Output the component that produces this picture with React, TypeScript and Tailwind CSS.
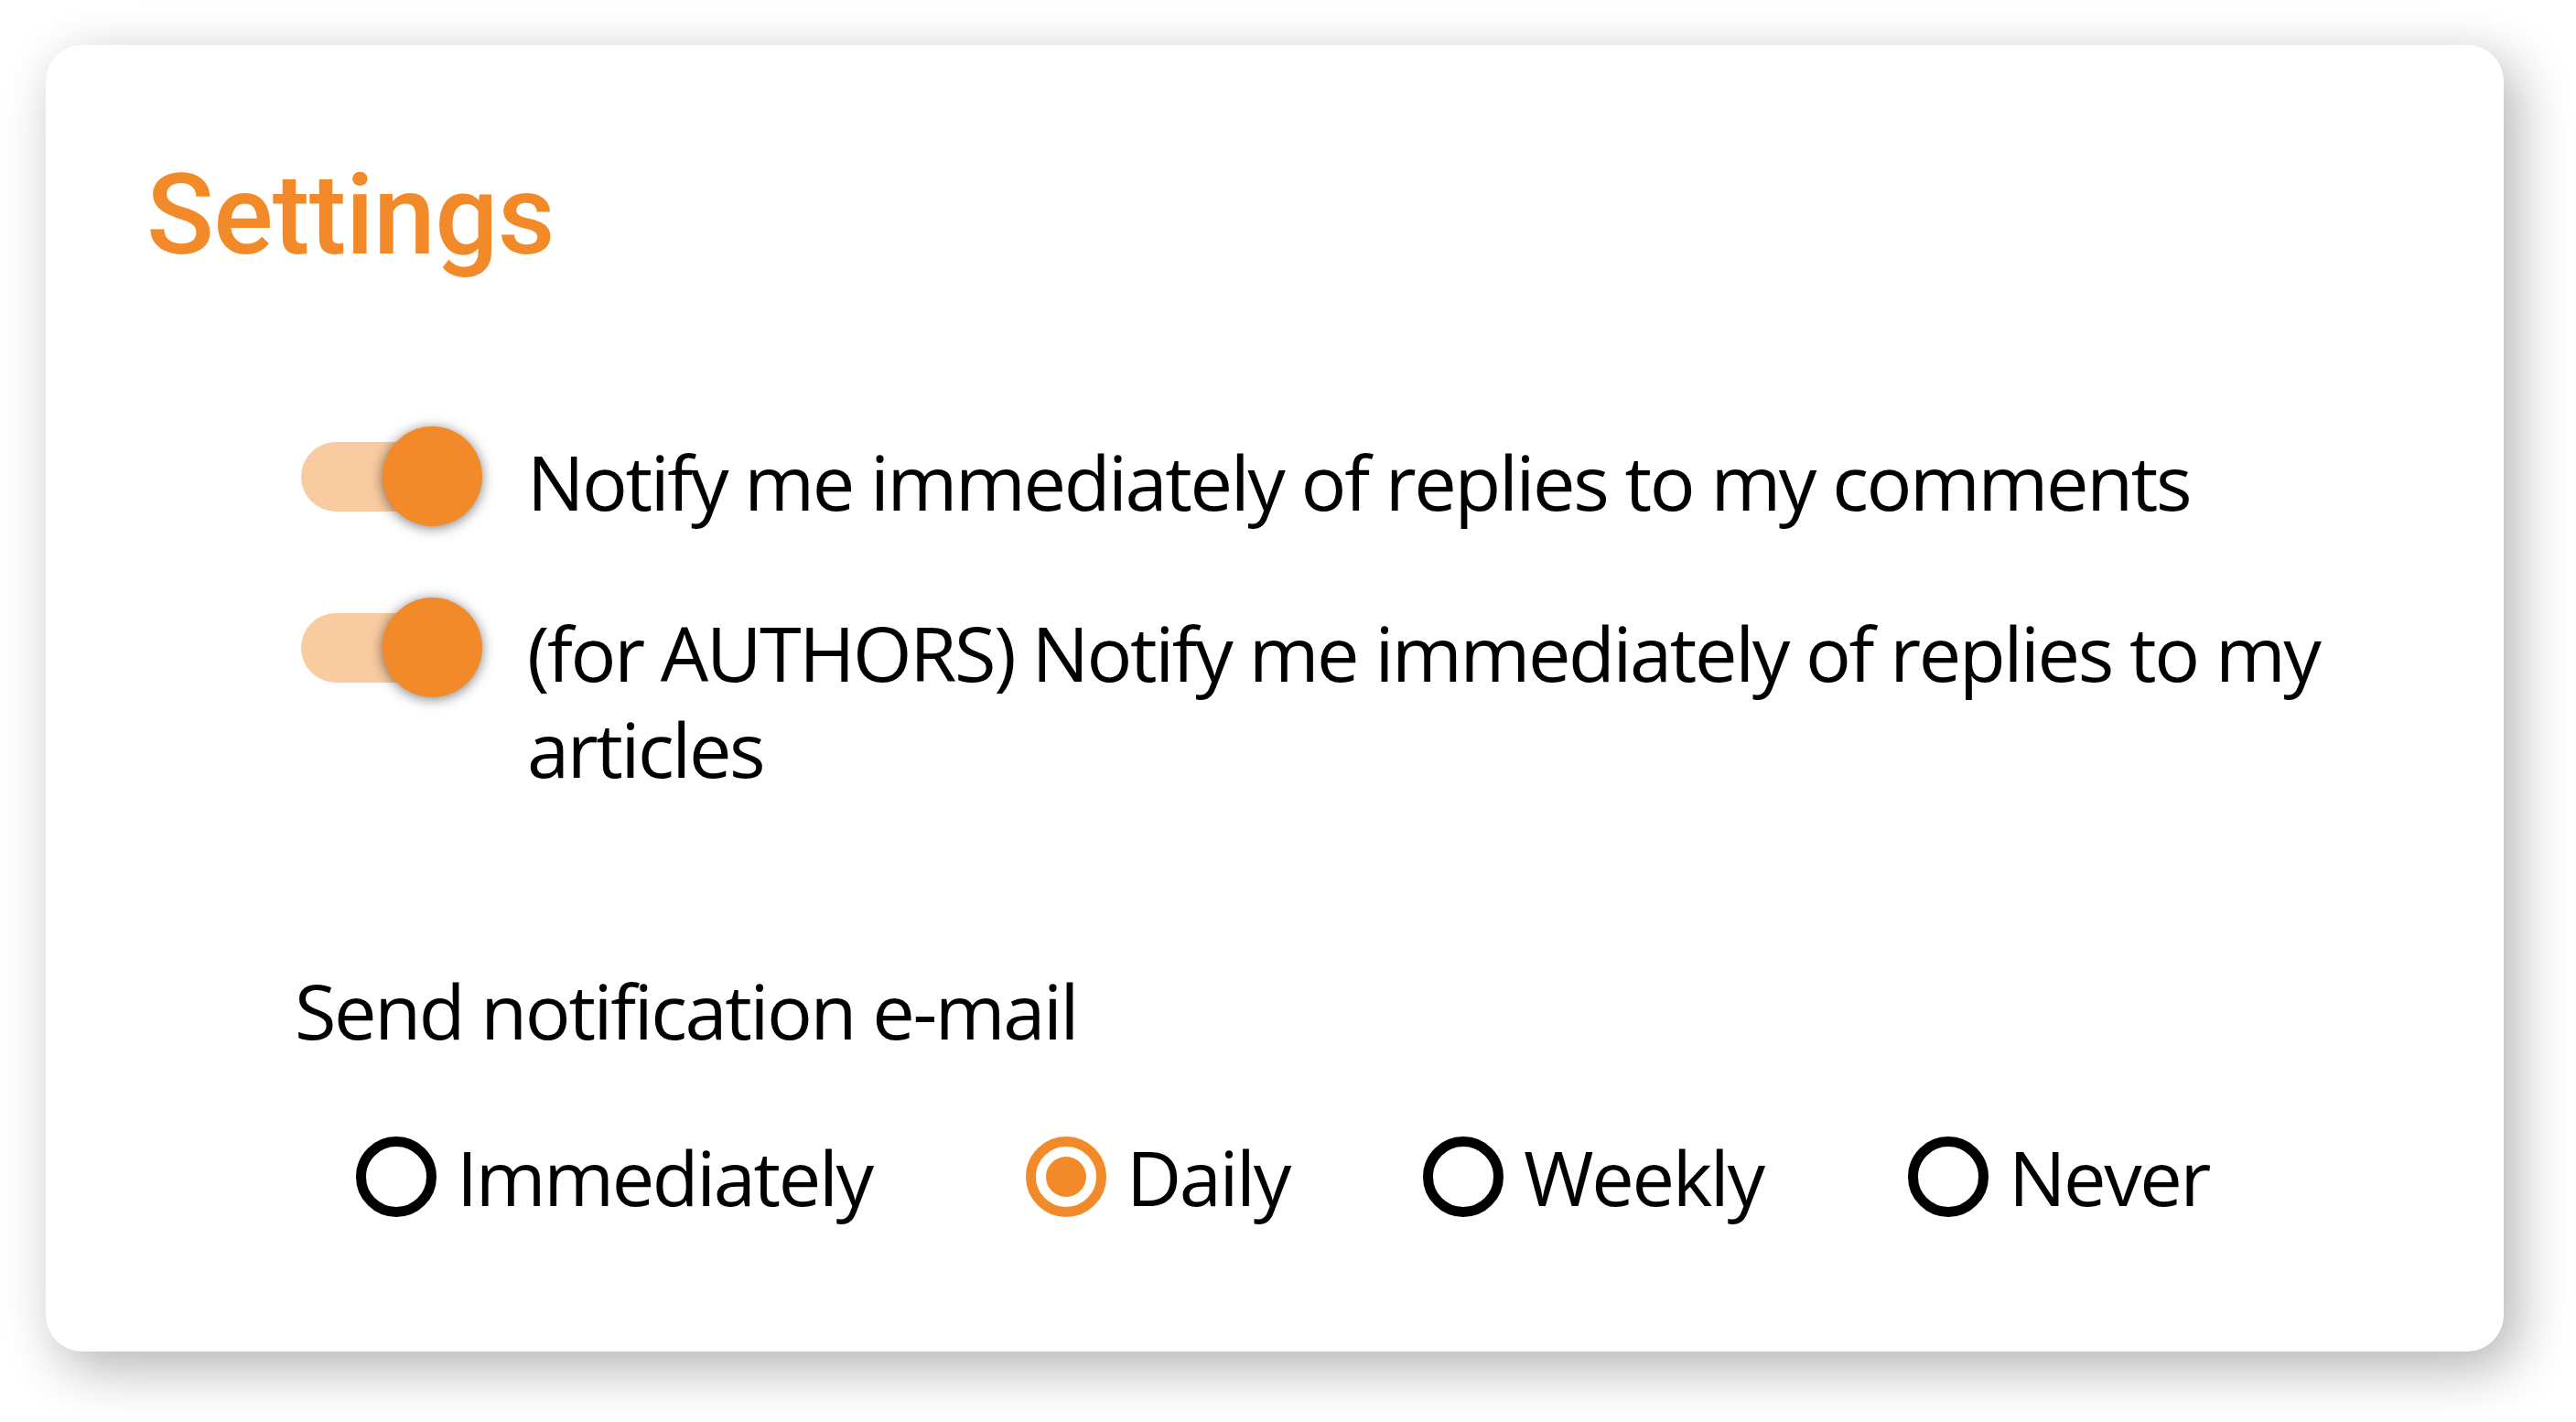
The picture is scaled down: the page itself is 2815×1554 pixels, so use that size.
import React from "react";

function Toggle() {
  return (
    <div className="relative h-[105px] w-[198px] shrink-0 -translate-y-[5px]">
      <div className="absolute left-0 top-[14.5px] h-[76px] w-[160px] rounded-full bg-[#f8cba0]" />
      <div className="absolute left-[89px] top-[-2px] h-[109px] w-[109px] rounded-full bg-[#f38a29] shadow-[0_2px_14px_rgba(0,0,0,0.5)]" />
    </div>
  );
}

function Radio({ label, selected, width }: { label: string; selected?: boolean; width: string }) {
  return (
    <div className={`flex items-center gap-[22px] ${width}`}>
      {selected ? (
        <div className="flex h-[88px] w-[88px] shrink-0 items-center justify-center rounded-full border-[11px] border-[#f38a29]">
          <div className="h-[44px] w-[44px] rounded-full bg-[#f38a29]" />
        </div>
      ) : (
        <div className="h-[88px] w-[88px] shrink-0 rounded-full border-[11px] border-black" />
      )}
      <span className="leading-[105px]">{label}</span>
    </div>
  );
}

export default function App() {
  return (
    <div className="h-[1554px] w-[2815px] bg-white pl-[50px] pt-[49px]">
      <div className="h-[1428px] w-[2686px] rounded-[40px] bg-white pl-[110px] pt-[126px] shadow-[14px_18px_60px_rgba(0,0,0,0.3)]">
        <h1 className="font-['Roboto',sans-serif] text-[122px] font-medium leading-[122px] tracking-[-0.7px] text-[#f38a29]">
          Settings
        </h1>
        <div className="ml-[169px] font-['Open_Sans',sans-serif] text-[83px] leading-[105px] tracking-[-2.4px] text-black">
          <div className="mt-[176px] flex items-start gap-[49px]">
            <Toggle />
            <div className="whitespace-nowrap">Notify me immediately of replies to my comments</div>
          </div>
          <div className="mt-[82px] flex items-start gap-[49px]">
            <Toggle />
            <div>
              (for AUTHORS) Notify me immediately of replies to my
              <br />
              articles
            </div>
          </div>
          <div className="mt-[181px] -ml-[7px]">Send notification e-mail</div>
          <div className="ml-[60px] mt-[77px] flex items-center">
            <Radio label="Immediately" width="w-[732px]" />
            <Radio label="Daily" selected width="w-[434px]" />
            <Radio label="Weekly" width="w-[530px]" />
            <Radio label="Never" width="w-auto" />
          </div>
        </div>
      </div>
    </div>
  );
}
